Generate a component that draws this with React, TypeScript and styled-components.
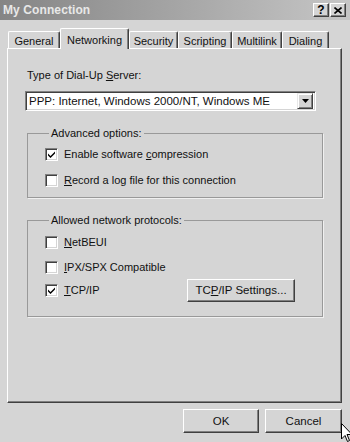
import React from 'react';
import styled, { createGlobalStyle } from 'styled-components';

const GlobalStyle = createGlobalStyle`
  html, body {
    margin: 0;
    padding: 0;
    background: #d5d5d5;
  }
  body {
    font-family: "Liberation Sans", Arial, sans-serif;
    font-size: 11px;
    color: #111;
  }
`;

const Window = styled.div`
  position: relative;
  width: 350px;
  height: 442px;
  overflow: hidden;
  background: #d5d5d5;
  display: flex;
  flex-direction: column;
`;

const TitleBar = styled.div`
  height: 20px;
  display: flex;
  align-items: center;
  justify-content: space-between;
  padding: 0 4px 0 3px;
  background: linear-gradient(to right, #858585 0%, #a8a8a8 55%, #c6c6c6 100%);
`;

const TitleText = styled.span`
  font-weight: bold;
  font-size: 12px;
  color: #e8e8e8;
  letter-spacing: 0.1px;
`;

const TitleButtons = styled.div`
  display: flex;
  gap: 1px;
`;

const CaptionButton = styled.div`
  width: 16px;
  height: 14px;
  box-sizing: border-box;
  background: #d5d5d5;
  border-top: 1px solid #fff;
  border-left: 1px solid #fff;
  border-right: 1px solid #404040;
  border-bottom: 1px solid #404040;
  box-shadow: inset -1px -1px 0 #808080;
  display: flex;
  align-items: center;
  justify-content: center;
  font-weight: bold;
  font-size: 12px;
  line-height: 1;
  color: #000;
`;

const Body = styled.div`
  padding: 8px 8px 0 7px;
  display: flex;
  flex-direction: column;
`;

const TabStrip = styled.div`
  display: flex;
  align-items: flex-end;
  height: 20px;
  padding-left: 1px;
`;

const Tab = styled.div<{ $active?: boolean; $width: number }>`
  position: relative;
  z-index: ${(p) => (p.$active ? 2 : 1)};
  box-sizing: border-box;
  width: ${(p) => p.$width}px;
  height: ${(p) => (p.$active ? '21px' : '17px')};
  margin-bottom: ${(p) => (p.$active ? '-1px' : '0')};
  padding-top: 1px;
  display: flex;
  align-items: center;
  justify-content: center;
  background: #d5d5d5;
  border-top: 1px solid #fff;
  border-left: 1px solid #fff;
  border-right: 1px solid #404040;
  border-radius: 2px 2px 0 0;
  box-shadow: inset -1px 0 0 #808080;
  font-size: 11px;
  white-space: nowrap;
  color: #111;
`;

const Panel = styled.div`
  box-sizing: border-box;
  width: 335px;
  height: 355px;
  border-top: 1px solid #fff;
  border-left: 1px solid #fff;
  border-right: 1px solid #404040;
  border-bottom: 1px solid #404040;
  box-shadow: inset -1px -1px 0 #808080;
  padding: 19px 0 0 17px;
  display: flex;
  flex-direction: column;
`;

const FieldLabel = styled.div`
  line-height: 14px;
  padding-left: 2px;
`;

const SelectBox = styled.div`
  box-sizing: border-box;
  margin-top: 9px;
  width: 291px;
  height: 20px;
  background: #fff;
  border-top: 1px solid #808080;
  border-left: 1px solid #808080;
  border-right: 1px solid #fff;
  border-bottom: 1px solid #fff;
  box-shadow: inset 1px 1px 0 #404040, inset -1px -1px 0 #d5d5d5;
  display: flex;
  align-items: center;
  padding: 2px 2px 2px 3px;
`;

const SelectValue = styled.span`
  flex: 1;
  font-size: 11.5px;
  white-space: nowrap;
`;

const DropButton = styled.div`
  box-sizing: border-box;
  width: 16px;
  height: 16px;
  background: #d5d5d5;
  border-top: 1px solid #e8e8e8;
  border-left: 1px solid #e8e8e8;
  border-right: 1px solid #404040;
  border-bottom: 1px solid #404040;
  box-shadow: inset 1px 1px 0 #fff, inset -1px -1px 0 #808080;
  display: flex;
  align-items: center;
  justify-content: center;
`;

const Group = styled.fieldset<{ $gap: number; $bottom: number }>`
  box-sizing: border-box;
  width: 296px;
  margin: ${(p) => p.$gap}px 0 0 2px;
  padding: 4px 0 ${(p) => p.$bottom}px 17px;
  border: 1px solid #999;
  box-shadow: 1px 1px 0 #f0f0f0;
  min-width: 0;
`;

const Legend = styled.legend`
  padding: 0 2px;
  margin-left: 4px;
  line-height: 14px;
`;

const Row = styled.div<{ $height?: number; $top?: number }>`
  display: flex;
  align-items: center;
  height: ${(p) => p.$height ?? 20}px;
  margin-top: ${(p) => p.$top ?? 0}px;
`;

const CheckLabel = styled.label`
  display: flex;
  align-items: center;
  gap: 6px;
  width: 142px;
  white-space: nowrap;
`;

const Box = styled.span`
  box-sizing: border-box;
  width: 13px;
  height: 13px;
  flex: none;
  background: #fff;
  border-top: 1px solid #808080;
  border-left: 1px solid #808080;
  border-right: 1px solid #fff;
  border-bottom: 1px solid #fff;
  box-shadow: inset 1px 1px 0 #404040, inset -1px -1px 0 #d5d5d5;
  display: flex;
  align-items: center;
  justify-content: center;
`;

const Button = styled.div<{ $width: number; $height: number }>`
  box-sizing: border-box;
  width: ${(p) => p.$width}px;
  height: ${(p) => p.$height}px;
  background: #d5d5d5;
  border-top: 1px solid #fff;
  border-left: 1px solid #fff;
  border-right: 1px solid #404040;
  border-bottom: 1px solid #404040;
  box-shadow: inset -1px -1px 0 #808080;
  display: flex;
  align-items: center;
  justify-content: center;
  font-size: 11.5px;
  color: #111;
`;

const ButtonRow = styled.div`
  display: flex;
  justify-content: flex-end;
  gap: 6px;
  margin-top: 6px;
`;

const Cursor = styled.svg`
  position: absolute;
  left: 341px;
  top: 423px;
`;

const Check = () => (
  <svg width="9" height="9" viewBox="0 0 9 9">
    <path d="M1 3.5 L3.5 6 L8 1.5 L8 3.5 L3.5 8 L1 5.5 Z" fill="#000" />
  </svg>
);

const CheckBox: React.FC<{ checked?: boolean; children: React.ReactNode }> = ({ checked, children }) => (
  <CheckLabel>
    <Box>{checked && <Check />}</Box>
    <span>{children}</span>
  </CheckLabel>
);

const tabs = [
  { name: 'General', width: 52 },
  { name: 'Networking', width: 69 },
  { name: 'Security', width: 49 },
  { name: 'Scripting', width: 54 },
  { name: 'Multilink', width: 50 },
  { name: 'Dialing', width: 47 },
];

export default function App() {
  return (
    <>
      <GlobalStyle />
      <Window>
        <TitleBar>
          <TitleText>My Connection</TitleText>
          <TitleButtons>
            <CaptionButton>?</CaptionButton>
            <CaptionButton>
              <svg width="8" height="7" viewBox="0 0 8 7">
                <path d="M0.5 0.5 L7.5 6.5 M7.5 0.5 L0.5 6.5" stroke="#000" strokeWidth="1.6" />
              </svg>
            </CaptionButton>
          </TitleButtons>
        </TitleBar>

        <Body>
          <TabStrip>
            {tabs.map((t) => (
              <Tab key={t.name} $width={t.width} $active={t.name === 'Networking'}>
                {t.name}
              </Tab>
            ))}
          </TabStrip>

          <Panel>
            <FieldLabel>
              Type of Dial-Up <u>S</u>erver:
            </FieldLabel>
            <SelectBox>
              <SelectValue>PPP: Internet, Windows 2000/NT, Windows ME</SelectValue>
              <DropButton>
                <svg width="7" height="4" viewBox="0 0 7 4">
                  <path d="M0 0 H7 L3.5 4 Z" fill="#000" />
                </svg>
              </DropButton>
            </SelectBox>

            <Group $gap={15} $bottom={7}>
              <Legend>Advanced options:</Legend>
              <Row>
                <CheckBox checked>
                  Enable software <u>c</u>ompression
                </CheckBox>
              </Row>
              <Row $top={6}>
                <CheckBox>
                  <u>R</u>ecord a log file for this connection
                </CheckBox>
              </Row>
            </Group>

            <Group $gap={15} $bottom={14}>
              <Legend>Allowed network protocols:</Legend>
              <Row $top={1}>
                <CheckBox>
                  <u>N</u>etBEUI
                </CheckBox>
              </Row>
              <Row $top={5}>
                <CheckBox>
                  <u>I</u>PX/SPX Compatible
                </CheckBox>
              </Row>
              <Row $height={24} $top={1}>
                <CheckBox checked>
                  <u>T</u>CP/IP
                </CheckBox>
                <Button $width={108} $height={23}>
                  TC<u>P</u>/IP Settings...
                </Button>
              </Row>
            </Group>
          </Panel>

          <ButtonRow>
            <Button $width={76} $height={24}>OK</Button>
            <Button $width={77} $height={24}>Cancel</Button>
          </ButtonRow>
        </Body>

        <Cursor width="12" height="20" viewBox="0 0 12 20">
          <path d="M0.5 0.5 L0.5 16 L4 12.5 L6.5 18.5 L8.5 17.5 L6 11.5 L11 11.5 Z" fill="#fff" stroke="#000" strokeWidth="1" />
        </Cursor>
      </Window>
    </>
  );
}
